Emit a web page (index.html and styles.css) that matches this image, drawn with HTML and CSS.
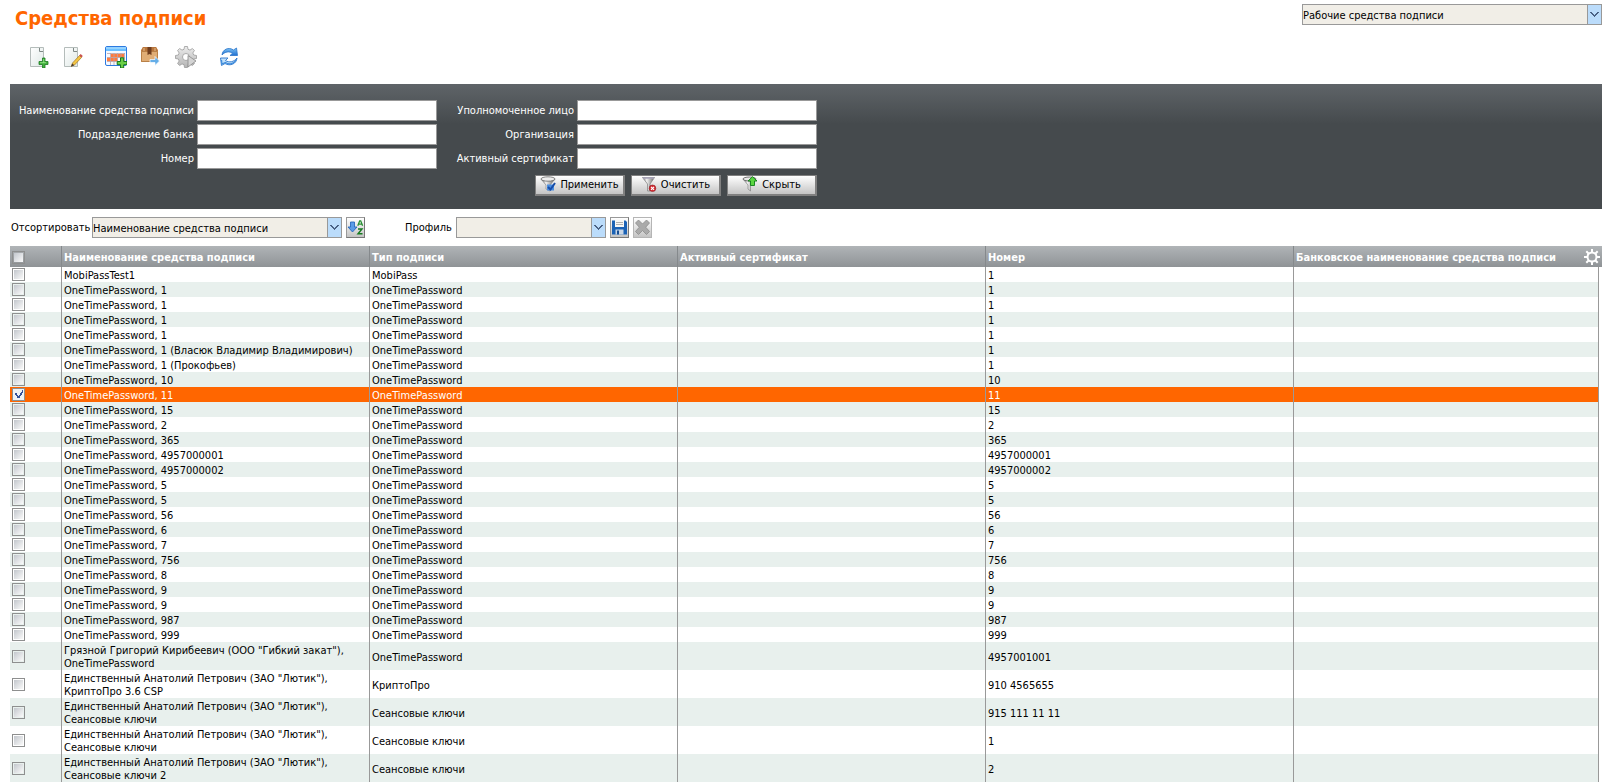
FILE: index.html
```html
<!DOCTYPE html>
<html lang="ru">
<head>
<meta charset="utf-8">
<title>Средства подписи</title>
<link rel="stylesheet" href="styles.css">
</head>
<body>
<svg class="defs" aria-hidden="true">
  <defs>
    <linearGradient id="g-page" x1="0" y1="0" x2="1" y2="1"><stop offset="0" stop-color="#fff"/><stop offset="1" stop-color="#dfe8e6"/></linearGradient>
    <linearGradient id="g-metal" x1="0" y1="0" x2="1" y2="0"><stop offset="0" stop-color="#777"/><stop offset=".35" stop-color="#f2f2f2"/><stop offset="1" stop-color="#666"/></linearGradient>
    <linearGradient id="g-gear" x1="0" y1="0" x2="0" y2="1"><stop offset="0" stop-color="#ececec"/><stop offset="1" stop-color="#b4b4b4"/></linearGradient>
    <linearGradient id="g-blue" x1="0" y1="0" x2="0" y2="1"><stop offset="0" stop-color="#7ec4f5"/><stop offset="1" stop-color="#1f6fd0"/></linearGradient>
    <symbol id="chevron" viewBox="0 0 9 6"><path d="M0 0h2v1h1v1h1v1h1v-1h1v-1h1v-1h2v1h-1v1h-1v1h-1v1h-1v1h-1v-1h-1v-1h-1v-1h-1v-1h-1z" fill="#4a6184"/></symbol>
  </defs>
</svg>

<header class="top">
  <h1 class="title">Средства подписи</h1>
  <span class="combo combo-view">
    <select class="combo-box" aria-label="Представление"><option>Рабочие средства подписи</option></select>
    <svg class="combo-arrow" aria-hidden="true"><use href="#chevron"/></svg>
  </span>
</header>

<div class="toolbar">
  <div class="tool-group">
    <button class="tool" type="button" aria-label="Создать">
      <svg viewBox="0 0 22 22"><path d="M3.500 1.500h13v19h-13z" fill="url(#g-page)" stroke="#b4bcba"/><path d="M12.500 2v3.500h3.500" fill="none" stroke="#7f8886"/><path d="M15.500 12v3.500H12v3h3.500V22h2.500v-3.500H21v-3h-3V12z" fill="#42b03c" stroke="#1d7a22" stroke-width=".8"/><path d="M16.700 13v4M13 16.700h6" stroke="#9be68c" stroke-width=".8"/></svg>
    </button>
    <button class="tool" type="button" aria-label="Изменить">
      <svg viewBox="0 0 22 22"><path d="M2.500 1.500h13v19h-13z" fill="url(#g-page)" stroke="#b4bcba"/><path d="M11.500 2v3.500H15" fill="none" stroke="#7f8886"/><path d="M10.500 17l7-7.500 2 2-7 7.500-3.300 1.300z" fill="#f4c542" stroke="#a07522" stroke-width=".7"/><path d="M17.200 9.400l1.500-1.300 2.100 2-1.300 1.500z" fill="#c9514d"/><path d="M10.300 17.500l2 1.700L9 20.800z" fill="#473b35"/></svg>
    </button>
  </div>
  <div class="tool-group">
    <button class="tool" type="button" aria-label="Добавить в список">
      <svg viewBox="0 0 22 22"><rect x=".5" y=".5" width="21" height="19" rx="1.500" fill="#f5f8ff" stroke="#2d7ae0"/><path d="M1 1h20v4H1z" fill="#6cc0ff"/><path d="M1 2h20" stroke="#bde5ff"/><path d="M6 8h13v3.500H6z" fill="#ff7a3c"/><path d="M2 11.500h10.500v3.700H2z" fill="#ff7a3c"/><path d="M2 7.500h18M2 11.500h18M2 15.500h18M5.500 7v12M9 7v12M12.500 7v12M16 7v12M19.500 7v12" stroke="#b9a2a8" stroke-width=".8"/><path d="M15.500 11.800v3.700h-3.300v3.200h3.300V22h3.200v-3.300H22v-3.200h-3.300v-3.700z" fill="#69cf45" stroke="#16761f"/></svg>
    </button>
    <button class="tool" type="button" aria-label="Отправить">
      <svg viewBox="0 0 22 22"><path d="M3 1h13l2 3v12H1V4z" fill="#d69a5e"/><path d="M3 1h13l2 4H1z" fill="#b8763d"/><path d="M1.500 5.500h16v10h-16z" fill="#e0ad75" stroke="#b98047"/><path d="M7.500 1h4v8l-2-1-2 1z" fill="#6f3d1e"/><path d="M4 2v3M15 2v3" stroke="#e5bc8b"/><path d="M10 13.500h5v-3l4.500 4.500-4.500 4.500v-3h-5z" fill="#65aee8" stroke="#fff" stroke-width=".7"/></svg>
    </button>
    <button class="tool" type="button" aria-label="Выполнить">
      <svg viewBox="0 0 22 22"><path d="M9.500.5h3l.5 2.800 2 .8 2.400-1.600 2 2-1.600 2.500.9 2 2.800.5v3l-2.800.5-.9 2 1.600 2.500-2 2-2.400-1.600-2 .8-.5 2.800h-3L9 18.700l-2-.8-2.400 1.600-2-2L4.200 15l-.9-2-2.800-.5v-3L3.300 9l.9-2-1.600-2.500 2-2L7 4.100l2-.8z" fill="url(#g-gear)" stroke="#9b9b9b" stroke-width=".8"/><circle cx="11" cy="11" r="3.500" fill="#fff" stroke="#999" stroke-width=".8"/><path d="M13 9.500l8 5.500-8 6z" fill="#d4d4d4" stroke="#898989" stroke-width=".8"/></svg>
    </button>
  </div>
  <div class="tool-group">
    <button class="tool" type="button" aria-label="Обновить">
      <svg viewBox="0 0 22 22"><path d="M4 9C4.500 3.500 10.500.5 15.500 4L18.500 2 19.500 9.500h-7.500l2.500-2.300C11.500 5 7 5.500 4 9z" fill="url(#g-blue)" stroke="#2c75c9" stroke-width=".8"/><path d="M19 12c-.5 6-7 8.500-12 5.500L3.500 19.500 2.500 12H10l-2.500 2.500C11 17 16 16 19 12z" fill="#bfe0fa" stroke="#2c75c9" stroke-width=".9"/><path d="M18 14c-2 4-7 5-10.500 2.500L4 18l-.5-4" fill="none" stroke="#3d8bdc" stroke-width="1.200"/></svg>
    </button>
  </div>
</div>

<form class="filter">
  <div class="filter-grid">
    <label class="filter-label" for="f-name">Наименование средства подписи</label><input class="filter-input" id="f-name" type="text">
    <label class="filter-label" for="f-person">Уполномоченное лицо</label><input class="filter-input" id="f-person" type="text">
    <label class="filter-label" for="f-branch">Подразделение банка</label><input class="filter-input" id="f-branch" type="text">
    <label class="filter-label" for="f-org">Организация</label><input class="filter-input" id="f-org" type="text">
    <label class="filter-label" for="f-num">Номер</label><input class="filter-input" id="f-num" type="text">
    <label class="filter-label" for="f-cert">Активный сертификат</label><input class="filter-input" id="f-cert" type="text">
    <div class="filter-actions">
      <button class="btn" type="button"><svg class="btn-icon" viewBox="0 0 16 16"><path d="M1 3l5 6v4l4 2V9l5-6z" fill="url(#g-metal)" stroke="#777" stroke-width=".6"/><ellipse cx="8" cy="3" rx="7" ry="2.200" fill="#eee" stroke="#666" stroke-width=".8"/><path d="M7 8.500h7v6H7z" fill="#4d8fe0"/><path d="M8 11l2.500 2.500L15 7" fill="none" stroke="#164ca8" stroke-width="2"/></svg>Применить</button>
      <button class="btn" type="button"><svg class="btn-icon" viewBox="0 0 16 16"><path d="M1.500 1.500h12L9 8v7H6.500V8z" fill="url(#g-metal)" stroke="#888" stroke-width=".8"/><path d="M2 2h11" stroke="#aaa6bd" stroke-width="1.500"/><circle cx="11.500" cy="12.300" r="3.300" fill="#d52b32" stroke="#8e161c" stroke-width=".6"/><path d="M10 10.800l3 3m0-3l-3 3" stroke="#fff" stroke-width="1.200"/></svg>Очистить</button>
      <button class="btn" type="button"><svg class="btn-icon" viewBox="0 0 16 16"><path d="M1 3l5 6v4l2.500 2V9L14 3z" fill="url(#g-metal)" stroke="#777" stroke-width=".6"/><ellipse cx="7.500" cy="3" rx="6.500" ry="2" fill="#e8e8e8" stroke="#555" stroke-width=".8"/><path d="M10.500.7L15 5h-2.500v4.500h-4V5H6z" fill="#5bd641" stroke="#107d18" stroke-width=".9"/></svg>Скрыть</button>
    </div>
  </div>
</form>

<div class="sortbar">
  <label class="sort-label" for="sort">Отсортировать</label>
  <span class="combo combo-sort">
    <select class="combo-box" id="sort"><option>Наименование средства подписи</option></select>
    <svg class="combo-arrow" aria-hidden="true"><use href="#chevron"/></svg>
  </span>
  <button class="mini" type="button" aria-label="Порядок сортировки"><svg viewBox="0 0 17 19"><path d="M3.500 4h4v5H10l-4.500 5L1 9h2.500z" fill="#5a9be6" stroke="#1c5fb8" stroke-width=".8"/><path d="M10.800 7.800l1.900-5h1l1.900 5M11.500 6.200h3.300" fill="none" stroke="#278f32" stroke-width="1.300"/><path d="M11 11h4L11 15.700h4.500" fill="none" stroke="#15791f" stroke-width="1.400"/></svg></button>
  <label class="sort-label profile-label" for="profile">Профиль</label>
  <span class="combo combo-profile">
    <select class="combo-box" id="profile"><option></option></select>
    <svg class="combo-arrow" aria-hidden="true"><use href="#chevron"/></svg>
  </span>
  <button class="mini" type="button" aria-label="Сохранить профиль"><svg viewBox="0 0 17 19"><path d="M1 2.500h13.500L16 4v12.500H1z" fill="#1b62b5"/><path d="M4 2h9v7H4z" fill="#f7f7f5"/><path d="M5 4.500h7M5 6.500h7" stroke="#b0b0b0"/><path d="M4.500 11.500h8v5h-8z" fill="#c8d6e6"/><path d="M6 12.500h2v4H6z" fill="#174d92"/></svg></button>
  <button class="mini mini-off" type="button" aria-label="Удалить профиль" disabled><svg viewBox="0 0 17 19"><path d="M4.500 2L8.500 6 12.500 2 15.500 5 11.700 9.200 15.500 13.500 12.500 16.500 8.500 12.500 4.500 16.500 1.500 13.500 5.300 9.200 1.500 5z" fill="#aaa" stroke="#8c8c8c" stroke-width=".8"/></svg></button>
</div>

<table class="grid">
  <colgroup><col class="col-check"><col class="col-data"><col class="col-data"><col class="col-data"><col class="col-data"><col><col class="col-edge"></colgroup>
  <thead>
    <tr>
      <th><input class="check" type="checkbox" aria-label="Выбрать все"></th>
      <th>Наименование средства подписи</th>
      <th>Тип подписи</th>
      <th>Активный сертификат</th>
      <th>Номер</th>
      <th colspan="2"><div class="th-last">Банковское наименование средства подписи
        <button class="gear" type="button" aria-label="Настройка столбцов"><svg viewBox="0 0 16 16"><g stroke="#fff" stroke-width="2"><path d="M8 0v16M0 8h16M2.300 2.300l11.400 11.400M13.700 2.300L2.300 13.700"/></g><circle cx="8" cy="8" r="4.500" fill="#a0a4a7" stroke="#fff" stroke-width="2"/></svg></button></div></th>
    </tr>
  </thead>
  <tbody id="rows"></tbody>
</table>
<script src="rows.js"></script>
</body>
</html>
```

FILE: styles.css
```css
* { box-sizing: border-box; }

body {
  margin: 0;
  padding: 0 7px 0 10px;
  background: #fff;
  color: #000;
  font: 11px/13px Tahoma, "DejaVu Sans Condensed", "DejaVu Sans", sans-serif;
  overflow: hidden;
}

button, input, select { font: inherit; color: inherit; margin: 0; }
button { cursor: pointer; }
.defs { position: absolute; width: 0; height: 0; }

.top {
  display: flex;
  justify-content: space-between;
  padding: 4px 0 0 5px;
}
.title {
  margin: 0;
  padding-top: 2px;
  font-size: 20px;
  line-height: 24px;
  color: #f60;
}

.combo { position: relative; display: block; height: 21px; }
.combo-view { width: 300px; }
.combo-sort { width: 250px; }
.combo-profile { width: 150px; }
.combo-box {
  appearance: none;
  display: block;
  width: 100%;
  height: 21px;
  padding: 1px 16px 0 0;
  border: 1px solid #999;
  border-radius: 0;
  background: #f1eee7;
}
.combo-arrow {
  position: absolute;
  top: 1px;
  right: 1px;
  width: 14px;
  height: 19px;
  padding: 7px 2px 6px 2px;
  border-left: 1px solid #999;
  background: #bbdcfb;
  pointer-events: none;
}

.toolbar {
  display: flex;
  gap: 21px;
  padding: 16px 0 16px 17px;
}
.tool-group { display: flex; gap: 13px; }
.tool {
  width: 22px;
  height: 22px;
  padding: 0;
  border: 0;
  background: none;
}
.tool svg { display: block; width: 22px; height: 22px; }

.filter {
  padding: 16px 0 13px;
  background: linear-gradient(#5f6468, #454a4d 40px);
}
.filter-grid {
  display: grid;
  grid-template-columns: 184px 240px 134px 240px;
  gap: 3px;
  align-items: center;
}
.filter-label { color: #fff; text-align: right; }
.filter-input {
  width: 100%;
  height: 21px;
  padding: 0 2px;
  border: 1px solid #999;
  background: #fff;
}
.filter-actions {
  grid-column: 1 / -1;
  display: flex;
  justify-content: flex-end;
  gap: 6px;
  padding-top: 3px;
}
.btn {
  display: flex;
  align-items: center;
  justify-content: center;
  gap: 4px;
  width: 90px;
  height: 21px;
  padding: 0 0 2px;
  border: solid #808080;
  border-width: 1px 2px 2px 1px;
  background: linear-gradient(#fff, #c4c4c4);
}
.btn-icon { width: 16px; height: 16px; }

.sortbar {
  display: flex;
  align-items: center;
  gap: 4px;
  padding: 8px 0;
}
.sort-label { width: 78px; padding-left: 1px; white-space: nowrap; }
.profile-label { width: 83px; padding-left: 36px; }
.mini {
  width: 19px;
  height: 21px;
  padding: 0;
  border: 1px solid #999;
  border-right-color: #777;
  border-bottom-color: #777;
  background: linear-gradient(#fff, #c4c4c4);
}
.mini svg { display: block; width: 17px; height: 19px; }
.mini-off { border-color: #b5b5b5; }

.grid {
  width: 100%;
  table-layout: fixed;
  border-collapse: separate;
  border-spacing: 0;
}
.col-check { width: 52px; }
.col-data { width: 308px; }
.col-edge { width: 3px; }
.grid thead tr { background: linear-gradient(#b0b4b7, #8f9396); }
.grid th {
  height: 21px;
  padding: 1px 2px 0;
  border-right: 1px solid #85898c;
  color: #fff;
  text-align: left;
  white-space: nowrap;
}
.grid th:last-child { border-right: 0; }
.grid td {
  height: 15px;
  padding: 2px 2px 0;
  border-right: 1px solid #999;
  background: #fff;
}
.grid td:first-child { padding: 1px 2px; }
.grid tr:nth-child(even) td { background: #e8f0ed; }
.grid tr.selected td { background: #f60; color: #fff; }
.grid tbody td.edge {
  padding: 0;
  border: 0;
  background: #fff;
}
.th-last { display: flex; align-items: center; justify-content: space-between; }
.gear { width: 16px; height: 16px; padding: 0; border: 0; background: none; }
.gear svg { display: block; }

.check {
  appearance: none;
  display: block;
  width: 13px;
  height: 13px;
  padding: 1px;
  border: 1px solid #8e8f8f;
  background: linear-gradient(135deg, #c3c7cd, #fafafa) content-box #f4f4f4;
}
.check:checked {
  background:
    linear-gradient(125deg, transparent 45%, #34509a 45% 65%, transparent 65%) 5px 1px / 5px 8px no-repeat,
    linear-gradient(55deg, transparent 35%, #34509a 35% 65%, transparent 65%) 2px 4px / 4px 5px no-repeat,
    #f0f2f6;
}
```

FILE: rows.js
```javascript
const otp = "OneTimePassword";
const data = [["MobiPassTest1", "MobiPass", "1"]];
const codes = [
  "1", "1", "1", "1", "1 (Власюк Владимир Владимирович)", "1 (Прокофьев)", "10", "11", "15", "2",
  "365", "4957000001", "4957000002", "5", "5", "56", "6", "7", "756", "8", "9", "9", "987", "999"
];
codes.forEach(c => data.push([otp + ", " + c, otp, c.split(" ")[0]]));
const owner = 'Единственный Анатолий Петрович (ЗАО "Лютик"), ';
data.push(
  ['Грязной Григорий Кирибеевич (ООО "Гибкий закат"), ' + otp, otp, "4957001001"],
  [owner + "КриптоПро 3.6 CSP", "КриптоПро", "910 4565655"],
  [owner + "Сеансовые ключи", "Сеансовые ключи", "915 111 11 11"],
  [owner + "Сеансовые ключи", "Сеансовые ключи", "1"],
  [owner + "Сеансовые ключи 2", "Сеансовые ключи", "2"]
);

const body = document.getElementById("rows");
data.forEach(([name, type, number]) => {
  const row = body.insertRow();
  const check = document.createElement("input");
  check.type = "checkbox";
  check.className = "check";
  check.setAttribute("aria-label", name);
  check.checked = number === "11";
  if (check.checked) row.className = "selected";
  row.insertCell().append(check);
  [name, type, "", number, ""].forEach(text => { row.insertCell().textContent = text; });
  row.insertCell().className = "edge";
});
```
